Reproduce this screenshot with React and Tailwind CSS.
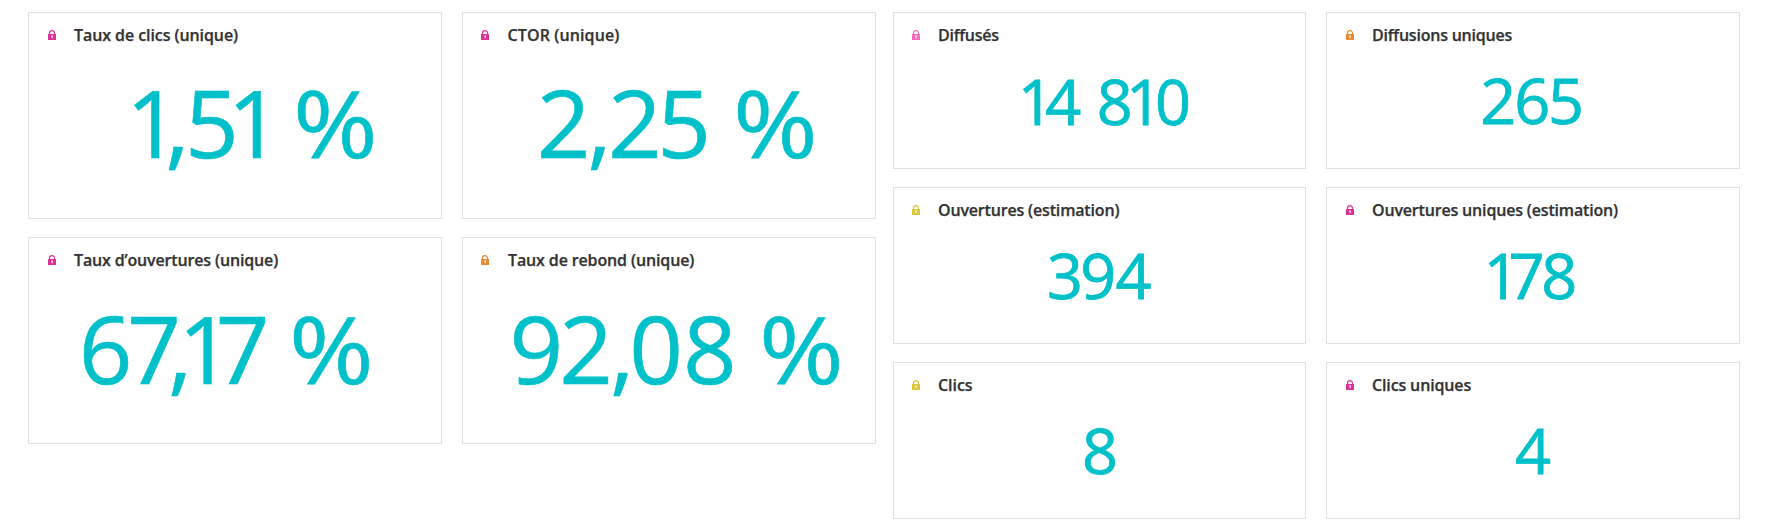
const rates = [
  { title: "Taux de clics (unique)", color: "text-[#de3195]", value: "1,51 %", kern: [-14.4, -4.6, -11.3, 0, -12.4, 0], left: 97, track: -0.08, lock: 19, text: 45, top: 30 },
  { title: "CTOR (unique)", color: "text-[#de3195]", value: "2,25 %", kern: [-3.2, -3.5, -4.6, 0, -2.4, 0], left: 73.7, track: 0.12, lock: 18, text: 44.5, top: 30 },
  { title: "Taux d’ouvertures (unique)", color: "text-[#de3195]", value: "67,17 %", kern: [-5.3, -12.8, -14.1, -16.4, 0, -5, 0], left: 49.7, track: -0.15, lock: 19, text: 45, top: 31 },
  { title: "Taux de rebond (unique)", color: "text-[#e68a33]", value: "92,08 %", kern: [-4, -3.1, -5, 0, 0, -2, 0], left: 46.5, track: -0.13, lock: 18, text: 45, top: 31 },
];

const counts = [
  { title: "Diffusés", color: "text-[#f76bb8]", value: "14 810", kern: [-8.5, 0, -1, -6.8, -7, 0], left: 123.8, track: -0.25, lock: 18, text: 44, top: 24 },
  { title: "Diffusions uniques", color: "text-[#e68a33]", value: "265", kern: [-2, -2.3, 0], left: 153.2, track: -0.22, lock: 19, text: 45, top: 23 },
  { title: "Ouvertures (estimation)", color: "text-[#dcc735]", value: "394", kern: [-2.9, -0.7, 0], left: 153, track: -0.17, lock: 18, text: 44, top: 23 },
  { title: "Ouvertures uniques (estimation)", color: "text-[#de3195]", value: "178", kern: [-11, -3.4, 0], left: 156.5, track: -0.17, lock: 19, text: 45, top: 23 },
  { title: "Clics", color: "text-[#dcc735]", value: "8", kern: [0], left: 187.9, track: -0.05, lock: 18, text: 44, top: 23 },
  { title: "Clics uniques", color: "text-[#de3195]", value: "4", kern: [0], left: 188, track: -0.14, lock: 19, text: 45, top: 23 },
];

function Lock({ className }) {
  return (
    <svg viewBox="0 0 8 10" className={`h-2.5 w-2 shrink-0 ${className}`} aria-hidden="true">
      <path d="M1.5 4.2V3.2a2.5 2.5 0 0 1 5 0v1" fill="none" stroke="currentColor" strokeWidth="1.2" />
      <path fill="currentColor" fillRule="evenodd" d="M0 4h8v6H0ZM3.4 5.6v1.2l.3.3v1.1h.9V7.1l.3-.3V5.6Z" />
    </svg>
  );
}

function Card({ item, size }) {
  return (
    <section className="overflow-hidden border border-[#e0e0e0] bg-white pt-3">
      <header className="flex h-5 items-center">
        <div className="shrink-0" style={{ width: item.lock }} />
        <Lock className={item.color} />
        <h2
          className="text-base leading-5 font-semibold whitespace-nowrap text-[#323232] [-webkit-text-stroke:0.25px_#323232]"
          style={{ marginLeft: item.text - item.lock - 8, letterSpacing: item.track }}
        >
          {item.title}
        </h2>
      </header>
      <p
        className={`${size} whitespace-pre text-[#00c1ca] [font-kerning:none]`}
        style={{ paddingLeft: item.left, paddingTop: item.top }}
      >
        {[...item.value].map((ch, i) => (
          <span
            key={i}
            className={ch === "%" ? "inline-block origin-left scale-x-[1.09]" : ""}
            style={{ letterSpacing: item.kern[i] }}
          >
            {ch}
          </span>
        ))}
      </p>
    </section>
  );
}

export default function App() {
  return (
    <main className="flex h-[531px] w-[1766px] items-start gap-[17px] bg-white pt-3 pl-7 font-['Open_Sans',sans-serif]">
      <div className="grid auto-rows-[207px] grid-cols-[414px_414px] gap-x-5 gap-y-[18px]">
        {rates.map((item) => (
          <Card key={item.title} item={item} size="text-[94px] leading-[94px] [-webkit-text-stroke:0.6px_#00c1ca]" />
        ))}
      </div>
      <div className="grid auto-rows-[157px] grid-cols-[413px_414px] gap-x-5 gap-y-[18px]">
        {counts.map((item) => (
          <Card key={item.title} item={item} size="text-[63px] leading-[63px] [-webkit-text-stroke:0.8px_#00c1ca]" />
        ))}
      </div>
    </main>
  );
}
